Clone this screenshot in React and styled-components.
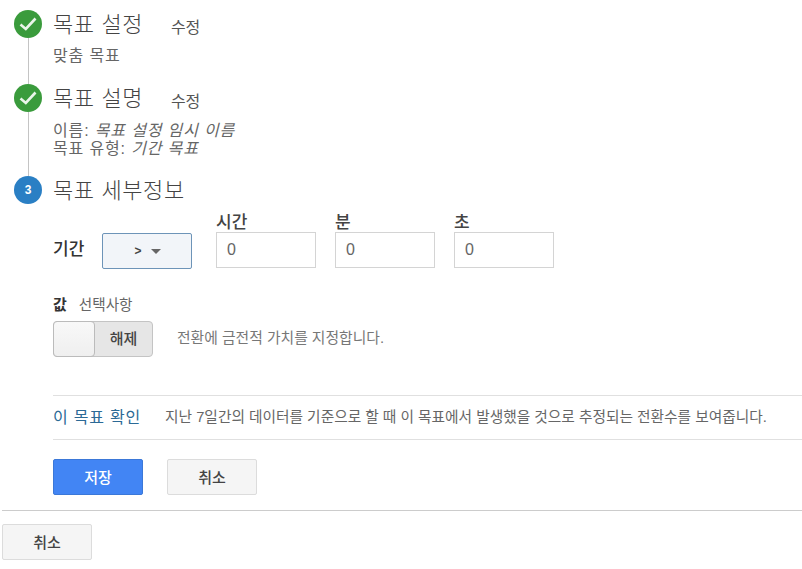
import React from "react";
import styled, { createGlobalStyle } from "styled-components";

const Global = createGlobalStyle`
  html, body { margin: 0; padding: 0; background: #fff; }
  body { font-family: "Liberation Sans", "Noto Sans CJK KR", sans-serif; color: #444; overflow: hidden; }
`;
const Page = styled.div`
  width: 802px; height: 569px; display: flex; flex-direction: column; padding-top: 10px; box-sizing: border-box;
`;
const Steps = styled.div`display: flex; flex-direction: column; padding-left: 14px;`;
const Step = styled.section`display: flex; gap: 11px; height: ${p => p.$h}px;`;
const Rail = styled.div`display: flex; flex-direction: column; align-items: center; width: 28px; flex: none;`;
const Connector = styled.div`width: 1px; flex: 1; background: #c4c4c4;`;
const Circle = styled.div`
  width: 28px; height: 28px; border-radius: 50%; flex: none; display: flex; align-items: center; justify-content: center;
  background: ${p => p.$c}; color: #fff; font: bold 12px "Liberation Sans", sans-serif;
`;
const Body = styled.div`flex: 1; display: flex; flex-direction: column; min-width: 0;`;
const Head = styled.div`display: flex; align-items: baseline; height: 30px;`;
const Title = styled.h2`margin: 0; font-size: 22px; font-weight: 300; line-height: 30px; letter-spacing: 0.6px; color: #444; width: 118px; white-space: nowrap;`;
const Edit = styled.span`font-size: 16px; color: #555; letter-spacing: -0.2px; position: relative; top: 1px;`;
const Meta = styled.div`font-size: 16px; line-height: 18px; letter-spacing: 0.85px; color: #666; margin-top: ${p => p.$mt || 0}px; em { font-style: italic; }`;
const Details = styled.div`padding-left: 53px; display: flex; flex-direction: column;`;
const TimeRow = styled.div`display: flex; align-items: flex-end; margin-top: 9px; height: 56px;`;
const RowLabel = styled.label`font-size: 17px; font-weight: 500; color: #333; width: 49px; line-height: 36px; align-self: flex-end; margin-bottom: 1px;`;
const Select = styled.button`
  width: 90px; height: 36px; box-sizing: border-box; border: 1px solid #6d94b8; border-radius: 2px; background: #f2f5f9;
  display: flex; align-items: center; justify-content: center; gap: 9px; font: bold 12px "Liberation Sans", sans-serif; color: #444; margin: 0 24px 0 0; padding: 0 0 0 1px;
`;
const Caret = styled.span`width: 0; height: 0; border-left: 5px solid transparent; border-right: 5px solid transparent; border-top: 5px solid #666;`;
const Field = styled.div`display: flex; flex-direction: column; width: 100px; margin-right: 19px; margin-bottom: 1px;`;
const FieldLabel = styled.label`font-size: 17px; font-weight: 500; color: #444; line-height: 20px; margin-bottom: -1px;`;
const Input = styled.input`
  width: 100px; height: 36px; box-sizing: border-box; border: 1px solid #d4d4d4; padding: 0 10px; font: 16px "Liberation Sans", sans-serif; color: #666; outline: none;
`;
const ValueHead = styled.div`display: flex; align-items: center; gap: 12px; margin-top: 24px; height: 20px; font-size: 14.6px; color: #666; b { color: #333; font-size: 15px; font-weight: 700; }`;
const ToggleRow = styled.div`display: flex; align-items: center; gap: 24px; margin-top: 8px;`;
const Toggle = styled.div`
  width: 100px; height: 36px; box-sizing: border-box; border: 1px solid #c4c4c4; border-radius: 4px; background: #e6e6e6; display: flex; position: relative;
`;
const Knob = styled.div`width: 40px; margin: -1px 0 -1px -1px; background: linear-gradient(#f8f8f8, #efefef); border: 1px solid #bbb; border-radius: 4px;`;
const ToggleText = styled.span`flex: 1; text-align: center; line-height: 34px; font-size: 15px; font-weight: 500; color: #444;`;
const Hint = styled.span`font-size: 14.8px; color: #777; padding-bottom: 5px;`;
const Verify = styled.div`
  margin-top: 38px; height: 45px; box-sizing: border-box; border-top: 1px solid #e0e0e0; border-bottom: 1px solid #e0e0e0;
  display: flex; align-items: center; gap: 24px; padding-bottom: 4px;
`;
const VerifyLink = styled.a`font-size: 16px; letter-spacing: 0.8px; color: #2b6a96; white-space: nowrap;`;
const VerifyText = styled.span`font-size: 14.7px; color: #666; white-space: nowrap;`;
const Actions = styled.div`display: flex; gap: 24px; margin-top: 19px;`;
const Btn = styled.button`
  width: 90px; height: 36px; box-sizing: border-box; border-radius: 2px; font: 500 15px "Liberation Sans", "Noto Sans CJK KR", sans-serif; padding: 0 0 2px;
  border: 1px solid ${p => p.$primary ? "#3b78d8" : "#dcdcdc"};
  background: ${p => p.$primary ? "#4285f4" : "#f5f5f5"};
  color: ${p => p.$primary ? "#fff" : "#444"};
`;
const Footer = styled.div`margin: 15px 0 0 2px; border-top: 1px solid #ccc; padding-top: 13px;`;

const Check = () => (
  <svg width="18" height="18" viewBox="0 0 18 18" fill="none" stroke="#eaf5ea" strokeWidth="2.6">
    <path d="M1.5 9.5 L6.8 14 L16.5 3.5" />
  </svg>
);

export default function App() {
  return (
    <Page>
      <Global />
      <Steps>
        <Step $h={74}>
          <Rail><Circle $c="#3a9b3c"><Check /></Circle><Connector /></Rail>
          <Body>
            <Head><Title>목표 설정</Title><Edit>수정</Edit></Head>
            <Meta $mt={7}>맞춤 목표</Meta>
          </Body>
        </Step>
        <Step $h={92}>
          <Rail><Circle $c="#3a9b3c"><Check /></Circle><Connector /></Rail>
          <Body>
            <Head><Title>목표 설명</Title><Edit>수정</Edit></Head>
            <Meta $mt={8}>이름: <em>목표 설정 임시 이름</em></Meta>
            <Meta>목표 유형: <em>기간 목표</em></Meta>
          </Body>
        </Step>
        <Step $h={28}>
          <Rail><Circle $c="#2a7fc4">3</Circle></Rail>
          <Body><Head><Title>목표 세부정보</Title></Head></Body>
        </Step>
      </Steps>
      <Details>
        <TimeRow>
          <RowLabel>기간</RowLabel>
          <Select>&gt; <Caret /></Select>
          <Field><FieldLabel>시간</FieldLabel><Input defaultValue="0" /></Field>
          <Field><FieldLabel>분</FieldLabel><Input defaultValue="0" /></Field>
          <Field><FieldLabel>초</FieldLabel><Input defaultValue="0" /></Field>
        </TimeRow>
        <ValueHead><b>값</b>선택사항</ValueHead>
        <ToggleRow>
          <Toggle><Knob /><ToggleText>해제</ToggleText></Toggle>
          <Hint>전환에 금전적 가치를 지정합니다.</Hint>
        </ToggleRow>
        <Verify>
          <VerifyLink>이 목표 확인</VerifyLink>
          <VerifyText>지난 7일간의 데이터를 기준으로 할 때 이 목표에서 발생했을 것으로 추정되는 전환수를 보여줍니다.</VerifyText>
        </Verify>
        <Actions><Btn $primary>저장</Btn><Btn>취소</Btn></Actions>
      </Details>
      <Footer><Btn>취소</Btn></Footer>
    </Page>
  );
}
